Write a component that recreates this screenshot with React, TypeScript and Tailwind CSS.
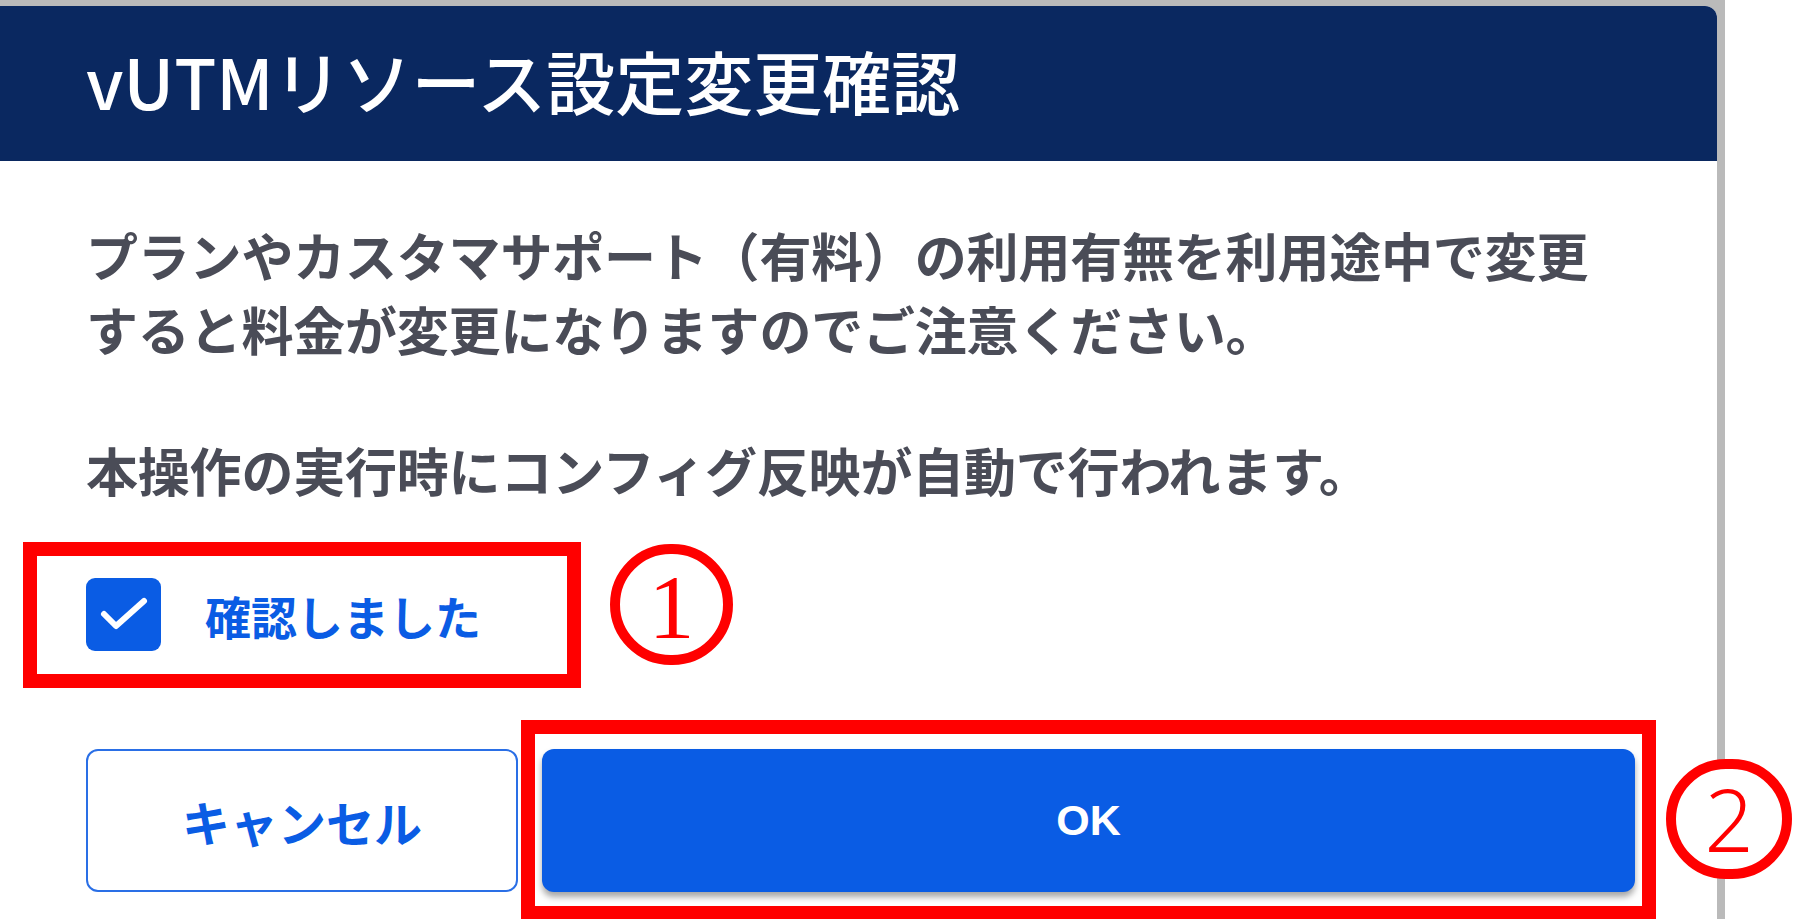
const font = "font-['Noto_Sans_CJK_JP','Noto_Sans',sans-serif]";

function CheckIcon() {
  return (
    <svg viewBox="0 0 75 73" className="w-[75px] h-[73px]">
      <polyline points="18,36 30,48 58,23" fill="none" stroke="#ffffff" strokeWidth="6" strokeLinecap="round" strokeLinejoin="round" />
    </svg>
  );
}

export default function App() {
  return (
    <div className={`relative w-[1798px] h-[919px] overflow-hidden bg-white ${font}`}>
      <div className="w-[1725px] h-full bg-[#bababa] pt-[6px] pr-[8px]">
        <div className="h-full bg-white rounded-tr-[12px] overflow-hidden flex flex-col">
          <header className="h-[155px] shrink-0 bg-[#0a2860] flex items-center pl-[86px] pb-[6px]">
            <h1 className="text-[69px] leading-none font-medium text-white">vUTMリソース設定変更確認</h1>
          </header>

          <div className="pl-[86px] pt-[57px] text-[#4a4c57] font-bold">
            <p className="text-[52px] leading-[74px] tracking-[-0.2px]">
              プランやカスタマサポート（有料）の利用有無を利用途中で変更
              <br />
              すると料金が変更になりますのでご注意ください。
            </p>
            <p className="mt-[67px] text-[52px] leading-[74px] tracking-[-0.2px]">本操作の実行時にコンフィグ反映が自動で行われます。</p>
          </div>

          <label className="ml-[86px] mt-[71px] flex items-center gap-[44px]">
            <span className="w-[75px] h-[73px] rounded-[9px] bg-[#0a5ce4] flex items-center justify-center">
              <CheckIcon />
            </span>
            <span className="text-[46px] leading-none font-bold text-[#0a5ce4]">確認しました</span>
          </label>

          <div className="ml-[86px] mt-[98px] flex gap-[24px]">
            <button className="w-[432px] h-[143px] rounded-[12px] border-2 border-[#2a6fe6] bg-white text-[48px] font-bold text-[#0a5ce4]">
              キャンセル
            </button>
            <button className="w-[1093px] h-[143px] rounded-[12px] bg-[#0a5ce4] text-[43px] font-bold text-white shadow-[0_5px_6px_rgba(0,0,0,0.35)] font-['Liberation_Sans',sans-serif]">
              OK
            </button>
          </div>
        </div>
      </div>

      {/* annotation: ① */}
      <div className="absolute left-[23px] top-[542px] w-[558px] h-[146px] border-[14px] border-[#ff0000]" />
      <div className="absolute left-[610px] top-[544px] w-[123px] h-[121px] rounded-full border-[10px] border-[#ff0000] bg-white flex items-center justify-center">
        <span className="text-[92px] leading-none text-[#ff0000] font-['Liberation_Serif',serif] mt-[4px]">1</span>
      </div>

      {/* annotation: ② */}
      <div className="absolute left-[521px] top-[720px] w-[1135px] h-[200px] border-[14px] border-[#ff0000]" />
      <div className="absolute left-[1666px] top-[759px] w-[126px] h-[120px] rounded-full border-[10px] border-[#ff0000] bg-white flex items-center justify-center">
        <span className="text-[86px] leading-none font-light text-[#ff0000] font-['Noto_Sans',sans-serif]">2</span>
      </div>
    </div>
  );
}
